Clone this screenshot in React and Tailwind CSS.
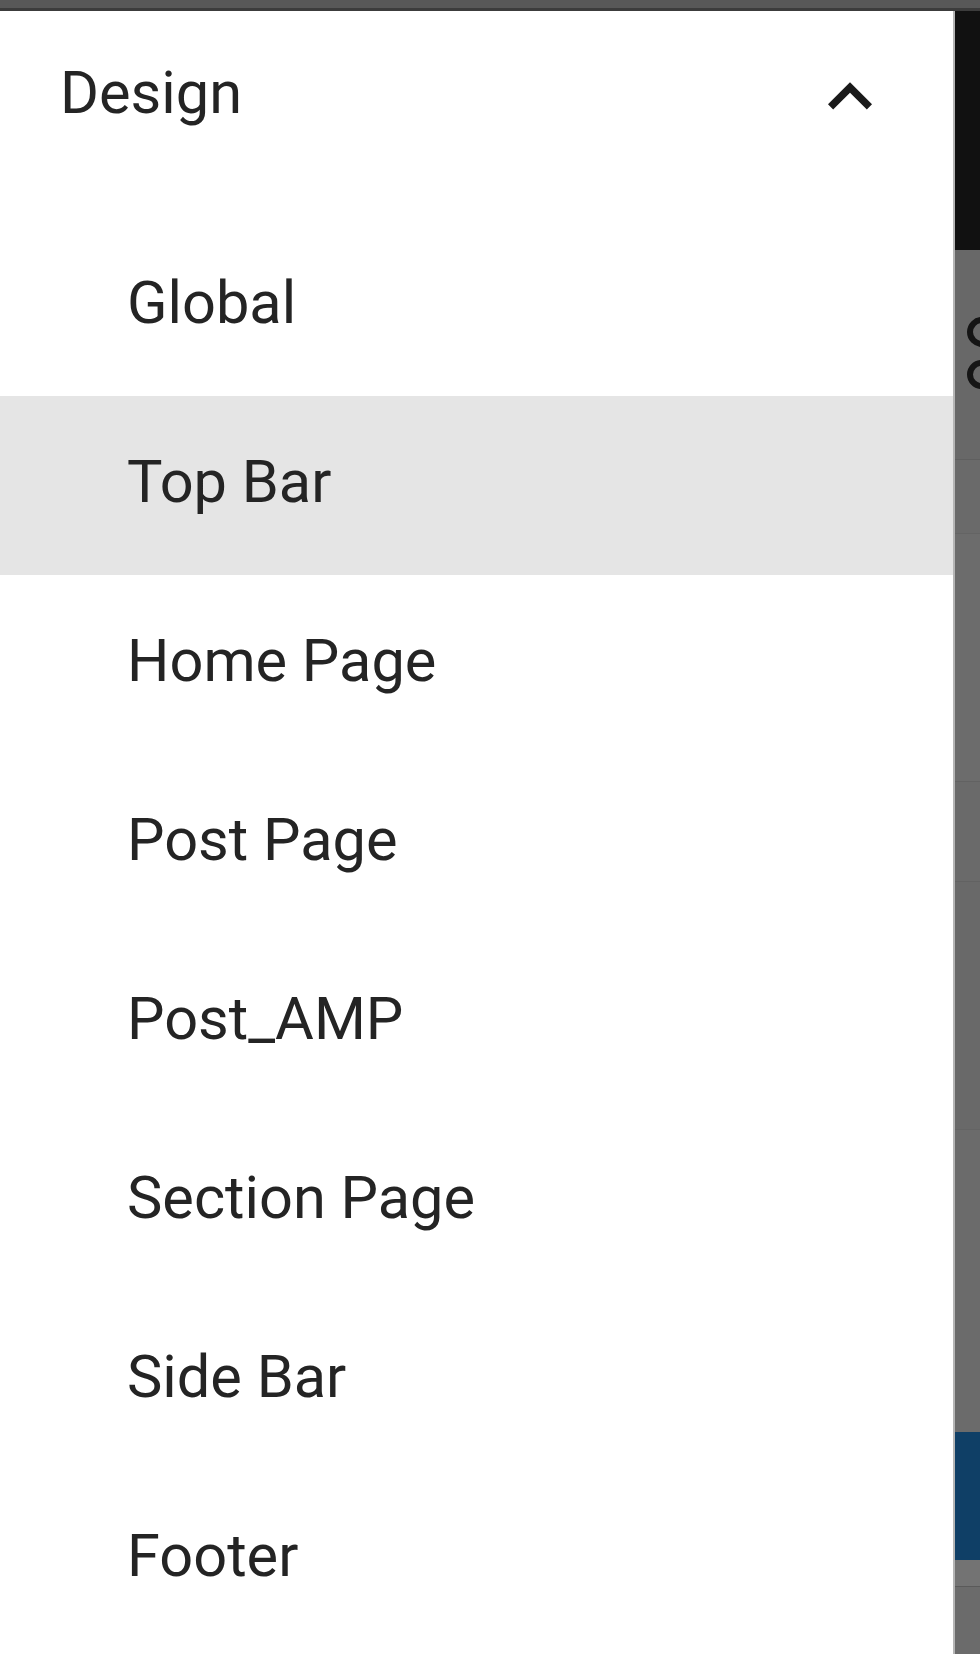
import React from 'react';

const items = [
  { label: 'Global' },
  { label: 'Top Bar', active: true },
  { label: 'Home Page' },
  { label: 'Post Page' },
  { label: 'Post_AMP' },
  { label: 'Section Page' },
  { label: 'Side Bar' },
  { label: 'Footer' },
];

function ExpandLess() {
  return (
    <svg viewBox="0 0 24 24" className="w-[88px] h-[88px] flex-shrink-0 mt-[4px]" fill="#1a1a1a">
      <path d="M12 8l-6 6 1.41 1.41L12 10.83l4.59 4.58L18 14z" />
    </svg>
  );
}

// page behind the drawer, dimmed by the backdrop
function Backdrop() {
  return (
    <div className="flex-1 flex flex-col bg-[#6b6b6b] overflow-hidden">
      <div className="h-[239px] bg-[#111111]" />
      <div className="h-[209px] bg-[#686868] relative">
        <div className="absolute left-[12px] top-[67px] w-[30px] h-[30px] rounded-full border-[6px] border-[#151515]" />
        <div className="absolute left-[12px] top-[110px] w-[30px] h-[29px] rounded-full border-[6px] border-[#151515]" />
      </div>
      <div className="h-[74px] border-t border-[#5f5f5f] bg-[#6a6a6a]" />
      <div className="h-[248px] border-t border-[#646464] bg-[#6c6c6c]" />
      <div className="h-[100px] border-t border-[#626262] bg-[#6a6a6a]" />
      <div className="h-[248px] border-t border-[#626262] bg-[#696969]" />
      <div className="h-[303px] border-t border-[#646464] bg-[#6b6b6b]" />
      <div className="h-[128px] bg-[#0f3f66]" />
      <div className="h-[27px] bg-[#737373] border-b border-[#5a5a5a]" />
      <div className="flex-1 bg-[#6b6b6b]" />
    </div>
  );
}

export default function App() {
  return (
    <div
      className="w-[980px] h-[1654px] flex flex-col overflow-hidden bg-[#6b6b6b]"
      style={{ fontFamily: 'Roboto, "Liberation Sans", sans-serif' }}
    >
      <div className="h-[11px] flex-shrink-0 bg-[#585858] border-b-[3px] border-[#3c3c3c]" />
      <div className="flex flex-1 min-h-0">
        <aside className="w-[953px] flex-shrink-0 bg-white flex flex-col overflow-hidden text-[#242424]">
          <div className="h-[167px] flex items-center justify-between pl-[60px] pr-[59px]">
            <span className="text-[59.5px] leading-none pb-[2px]">Design</span>
            <ExpandLess />
          </div>
          <nav className="pt-[39px] flex flex-col">
            {items.map(({ label, active }) => (
              <div
                key={label}
                className={
                  active
                    ? 'h-[179px] flex-shrink-0 flex items-center pl-[127px] pb-[6px] bg-[#e5e5e5]'
                    : 'h-[179px] flex-shrink-0 flex items-center pl-[127px] pb-[6px]'
                }
              >
                <span className="text-[59.5px] leading-none">{label}</span>
              </div>
            ))}
          </nav>
        </aside>
        <div className="w-[2px] flex-shrink-0 bg-[#b5b5b5]" />
        <Backdrop />
      </div>
    </div>
  );
}
